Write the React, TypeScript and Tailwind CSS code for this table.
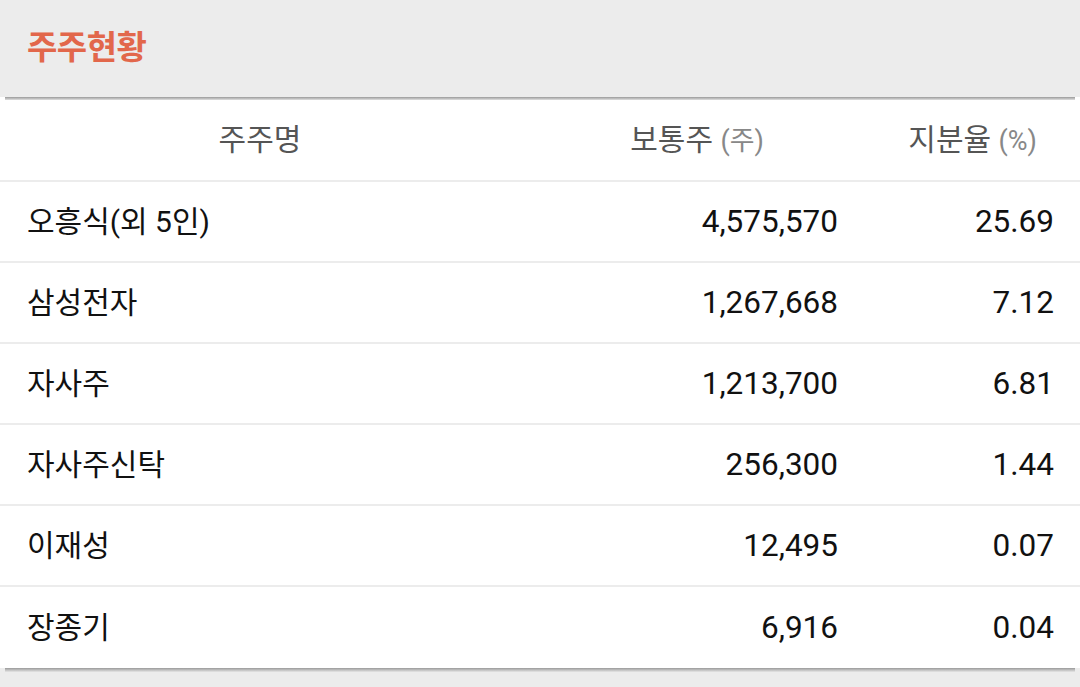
const rows = [
  { name: "오흥식(외 5인)", shares: "4,575,570", pct: "25.69" },
  { name: "삼성전자", shares: "1,267,668", pct: "7.12" },
  { name: "자사주", shares: "1,213,700", pct: "6.81" },
  { name: "자사주신탁", shares: "256,300", pct: "1.44" },
  { name: "이재성", shares: "12,495", pct: "0.07" },
  { name: "장종기", shares: "6,916", pct: "0.04" },
];

const font = "font-['Roboto','Noto_Sans_CJK_KR',sans-serif]";

export default function App() {
  return (
    <div className={`h-[687px] w-[1080px] overflow-hidden bg-[#ececec] ${font}`}>
      <div className="flex h-[97px] items-center px-[27px] pb-[2px]">
        <h2 className="text-[33px] font-bold tracking-[-0.5px] text-[#e2674b]">주주현황</h2>
      </div>
      <div className="relative bg-white">
        <div className="absolute inset-x-[5px] top-0 h-[3px] bg-gradient-to-b from-[#9a9a9a] to-[#e0e0e0]" />
        <div className="grid h-[85px] grid-cols-[520px_1fr_216px] items-center border-b-2 border-[#ececec] pt-[2px] text-[30px] text-[#555]">
          <div className="text-center">주주명</div>
          <div className="pr-[100px] text-right">
            보통주 <span className="text-[27px] text-[#888]">(주)</span>
          </div>
          <div className="pr-[43px] text-right">
            지분율 <span className="text-[27px] text-[#888]">(%)</span>
          </div>
        </div>
        {rows.map((r, i) => (
          <div
            key={r.name}
            className={`grid h-[81px] grid-cols-[520px_1fr_216px] items-center text-[30px] text-[#111] ${
              i < rows.length - 1 ? "border-b-2 border-[#ececec]" : ""
            }`}
          >
            <div className="pl-[27px]">{r.name}</div>
            <div className="pr-[26px] text-right text-[31.5px]">{r.shares}</div>
            <div className="pr-[26px] text-right text-[31.5px]">{r.pct}</div>
          </div>
        ))}
      </div>
      <div className="mx-[5px] h-[4px] bg-gradient-to-b from-[#9a9a9a] to-[#e6e6e6]" />
    </div>
  );
}
